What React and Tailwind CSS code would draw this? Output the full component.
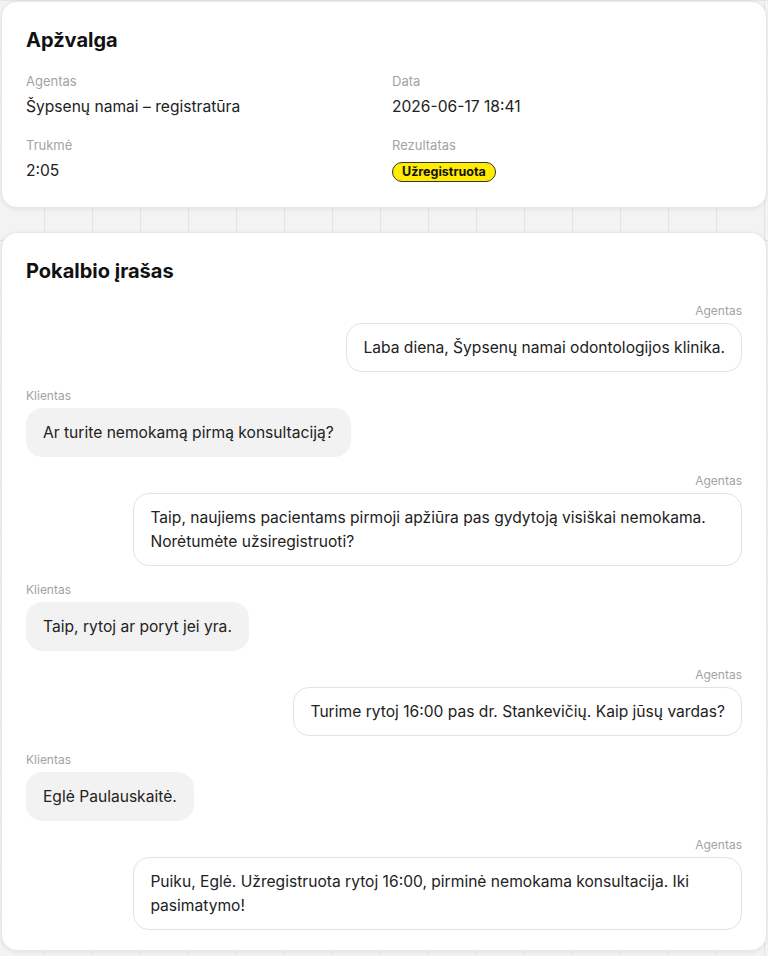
import React from "react";

const messages = [
  { from: "agent", text: "Laba diena, Šypsenų namai odontologijos klinika." },
  { from: "client", text: "Ar turite nemokamą pirmą konsultaciją?" },
  {
    from: "agent",
    text: "Taip, naujiems pacientams pirmoji apžiūra pas gydytoją visiškai nemokama. Norėtumėte užsiregistruoti?",
  },
  { from: "client", text: "Taip, rytoj ar poryt jei yra." },
  { from: "agent", text: "Turime rytoj 16:00 pas dr. Stankevičių. Kaip jūsų vardas?" },
  { from: "client", text: "Eglė Paulauskaitė." },
  {
    from: "agent",
    text: "Puiku, Eglė. Užregistruota rytoj 16:00, pirminė nemokama konsultacija. Iki pasimatymo!",
  },
];

const Field = ({ label, children }) => (
  <div className="flex flex-col gap-[5px]">
    <span className="text-[13px] leading-5 text-[#a3a3a3]">{label}</span>
    <div className="text-[15.6px] leading-[22px] text-[#222]">{children}</div>
  </div>
);

const Message = ({ from, text }) => {
  const isAgent = from === "agent";
  return (
    <div className={`flex flex-col gap-1 ${isAgent ? "items-end" : "items-start"}`}>
      <span className="text-xs leading-4 text-[#a3a3a3]">{isAgent ? "Agentas" : "Klientas"}</span>
      <div
        className={
          isAgent
            ? "max-w-[85%] rounded-2xl border border-[#e3e3e3] bg-white px-4 py-[11.5px] text-[15.6px] leading-6 text-[#222]"
            : "max-w-[85%] rounded-2xl border border-[#f2f2f2] bg-[#f2f2f2] px-4 py-[11.5px] text-[15.6px] leading-6 text-[#222]"
        }
      >
        {text}
      </div>
    </div>
  );
};

const App = () => {
  return (
    <div
      className="min-h-screen bg-[#f3f3f3] bg-[linear-gradient(to_right,#e4e4e4_1px,transparent_1px),linear-gradient(to_bottom,#e4e4e4_1px,transparent_1px)] bg-[size:48px_48px] bg-[position:44px_0px] px-px pt-px pb-6"
      style={{ fontFamily: "Inter, 'Noto Sans', sans-serif" }}
    >
      <div className="rounded-2xl border border-[#e8e8e8] bg-white px-6 pt-6 pb-[25px] shadow-[0_1px_4px_rgba(0,0,0,0.08)]">
        <h2 className="text-xl leading-7 font-bold text-[#111]">Apžvalga</h2>
        <div className="mt-[17px] grid grid-cols-2 gap-x-4 gap-y-[17px]">
          <Field label="Agentas">Šypsenų namai – registratūra</Field>
          <Field label="Data">2026-06-17 18:41</Field>
          <Field label="Trukmė">2:05</Field>
          <Field label="Rezultatas">
            <span className="inline-flex h-5 items-center rounded-full border border-[#333] bg-[#ffec00] px-[9px] text-[12.5px] leading-none font-bold text-[#111]">
              Užregistruota
            </span>
          </Field>
        </div>
      </div>

      <div className="mt-6 rounded-2xl border border-[#e8e8e8] bg-white px-6 pt-6 pb-5 shadow-[0_1px_4px_rgba(0,0,0,0.08)]">
        <h2 className="text-xl leading-7 font-bold text-[#111]">Pokalbio įrašas</h2>
        <div className="mt-[18px] flex flex-col gap-4">
          {messages.map((m, i) => (
            <Message key={i} from={m.from} text={m.text} />
          ))}
        </div>
      </div>
    </div>
  );
};

export default App;
